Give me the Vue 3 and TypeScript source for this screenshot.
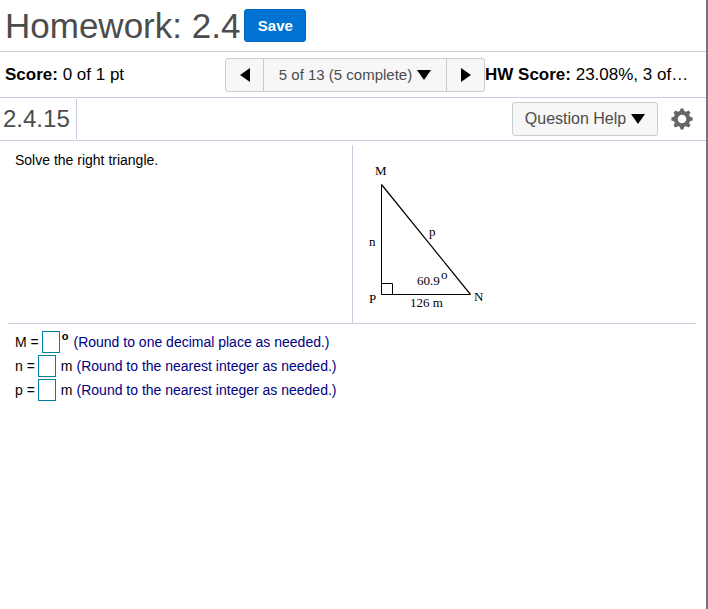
<script setup lang="ts">
import { ref } from 'vue'

interface Answer {
  id: string
  label: string
  unit: string
  degree: boolean
  hint: string
}

const answers: Answer[] = [
  { id: 'angle-m', label: 'M =', unit: 'o', degree: true, hint: '(Round to one decimal place as needed.)' },
  { id: 'side-n', label: 'n =', unit: 'm', degree: false, hint: '(Round to the nearest integer as needed.)' },
  { id: 'side-p', label: 'p =', unit: 'm', degree: false, hint: '(Round to the nearest integer as needed.)' },
]

const values = ref<Record<string, string>>({ 'angle-m': '', 'side-n': '', 'side-p': '' })

const teeth = [0, 45, 90, 135, 180, 225, 270, 315]
</script>

<template>
  <div class="page">
    <header class="title-bar">
      <h1>Homework: 2.4</h1>
      <button class="save" type="button">Save</button>
    </header>

    <div class="score-bar">
      <p class="score"><b>Score:</b> 0 of 1 pt</p>
      <nav class="pager">
        <button type="button" aria-label="Previous question">
          <svg width="10" height="14" viewBox="0 0 10 14"><path d="M10 0v14L0 7z" /></svg>
        </button>
        <button class="current" type="button">
          5 of 13 (5 complete)
          <svg width="14" height="10" viewBox="0 0 14 10"><path d="M0 0h14L7 10z" /></svg>
        </button>
        <button type="button" aria-label="Next question">
          <svg width="10" height="14" viewBox="0 0 10 14"><path d="M0 0v14l10-7z" /></svg>
        </button>
      </nav>
      <p class="hw-score"><b>HW Score:</b> 23.08%, 3 of…</p>
    </div>

    <div class="exercise-bar">
      <h2>2.4.15</h2>
      <button class="help" type="button">
        Question Help
        <svg width="14" height="10" viewBox="0 0 14 10"><path d="M0 0h14L7 10z" /></svg>
      </button>
      <button class="settings" type="button" aria-label="Settings">
        <svg width="22" height="22" viewBox="-11 -11 22 22">
          <circle r="6.300" fill="none" stroke="#666" stroke-width="4" />
          <path v-for="a in teeth" :key="a" d="M-2.4-7L-1.4-10.6h2.8L2.4-7z" fill="#666" :transform="`rotate(${a})`" />
        </svg>
      </button>
    </div>

    <main>
      <section class="problem">
        <p class="prompt">Solve the right triangle.</p>
        <div class="figure">
          <svg width="140" height="160" viewBox="360 160 140 160" role="img" aria-label="Right triangle MNP">
            <g fill="none" stroke="#000">
              <path d="M381.500 184.500V294.500H470.500" />
              <path d="M381.500 184.500L470.500 294.500" stroke-width="1.200" />
              <path d="M381.500 283.500h11v11" />
            </g>
            <g class="names">
              <text x="375" y="175">M</text>
              <text x="369" y="246">n</text>
              <text x="429" y="236">p</text>
              <text x="369" y="303">P</text>
              <text x="474" y="301">N</text>
              <text x="417" y="285">60.9</text>
              <text x="441" y="279">o</text>
              <text x="410" y="307">126 m</text>
            </g>
          </svg>
        </div>
      </section>

      <form class="answers" @submit.prevent>
        <div v-for="a in answers" :key="a.id" class="answer">
          <label :for="a.id">{{ a.label }}</label>
          <input :id="a.id" v-model="values[a.id]" type="text" autocomplete="off" />
          <span :class="a.degree ? 'degree' : 'unit'">{{ a.unit }}</span>
          <span class="hint">{{ a.hint }}</span>
        </div>
      </form>
    </main>
  </div>
</template>

<style>
body {
  background: #fff;
}
</style>

<style scoped>
.page {
  box-sizing: border-box;
  min-height: 100vh;
  border-right: 2px solid #70757c;
  color: #000;
  font: 14px/24px "Liberation Sans", Arial, sans-serif;
}

h1,
h2,
p {
  margin: 0;
  font-weight: normal;
}

button {
  box-sizing: border-box;
  margin: 0;
  font-family: inherit;
}

.title-bar {
  display: flex;
  align-items: center;
  gap: 4px;
  height: 51px;
  padding-left: 5px;
  border-bottom: 1px solid #cccedd;
}

h1 {
  color: #4c4c4c;
  font-size: 35px;
  line-height: 40px;
  white-space: nowrap;
}

.save {
  width: 62px;
  height: 33px;
  padding: 0;
  border: 1px solid #0068bd;
  border-radius: 3px;
  background: #0073d5;
  color: #fff;
  font-size: 15px;
  font-weight: bold;
}

.score-bar {
  display: grid;
  grid-template-columns: 220px 260px 1fr;
  align-items: center;
  height: 45px;
  padding-left: 5px;
  border-bottom: 1px solid #c8cddd;
  font-size: 17px;
  white-space: nowrap;
}

.hw-score {
  overflow: hidden;
}

.pager {
  display: flex;
  height: 34px;
  box-sizing: border-box;
  border: 1px solid #ccc;
  border-radius: 3px;
  background: #f7f7f7;
}

.pager button {
  display: flex;
  flex: 0 0 37px;
  align-items: center;
  justify-content: center;
  padding: 0;
  border: 0;
  background: none;
  color: #4c4c4c;
  font-size: 15px;
}

.pager .current {
  flex: 1;
  gap: 5px;
  border-right: 1px solid #ccc;
  border-left: 1px solid #ccc;
}

.exercise-bar {
  display: flex;
  align-items: center;
  height: 42px;
  padding-right: 13px;
  border-bottom: 1px solid #c8cddd;
}

h2 {
  margin-right: auto;
  padding: 0 6px 0 3px;
  border-right: 1px solid #c8cddd;
  color: #4c4c4c;
  font-size: 24px;
  line-height: 40px;
}

.help {
  display: flex;
  align-items: center;
  justify-content: center;
  gap: 5px;
  width: 146px;
  height: 34px;
  padding: 0;
  border: 1px solid #ccc;
  border-radius: 3px;
  background: #f7f7f7;
  color: #4c4c4c;
  font-size: 16px;
}

.settings {
  display: flex;
  margin-left: 13px;
  padding: 0;
  border: 0;
  background: none;
}

main {
  padding: 4px 10px 0 8px;
}

.problem {
  display: grid;
  grid-template-columns: 1fr 1fr;
  border-bottom: 1px solid #c8cddd;
}

.prompt {
  padding: 3px 0 0 7px;
}

.figure {
  padding: 15px 0 3px 7px;
  border-left: 1px solid #c8cddd;
}

.figure svg {
  display: block;
}

.names {
  font: 13px "Liberation Serif", "Times New Roman", serif;
}

.answers {
  padding: 6px 0 0 7px;
}

.answer {
  display: flex;
  align-items: center;
  height: 24px;
}

.answer input {
  box-sizing: border-box;
  width: 18px;
  height: 22px;
  margin: 0 5px 0 3px;
  padding: 0;
  border: 1px solid #007fa3;
  border-radius: 0;
  background: #fff;
  font: inherit;
}

.degree {
  align-self: flex-start;
  margin: 0 5px 0 -3px;
  font-size: 11px;
  font-weight: bold;
  line-height: 12px;
}

.unit {
  margin-right: 4px;
}

.hint {
  color: #000080;
}
</style>
